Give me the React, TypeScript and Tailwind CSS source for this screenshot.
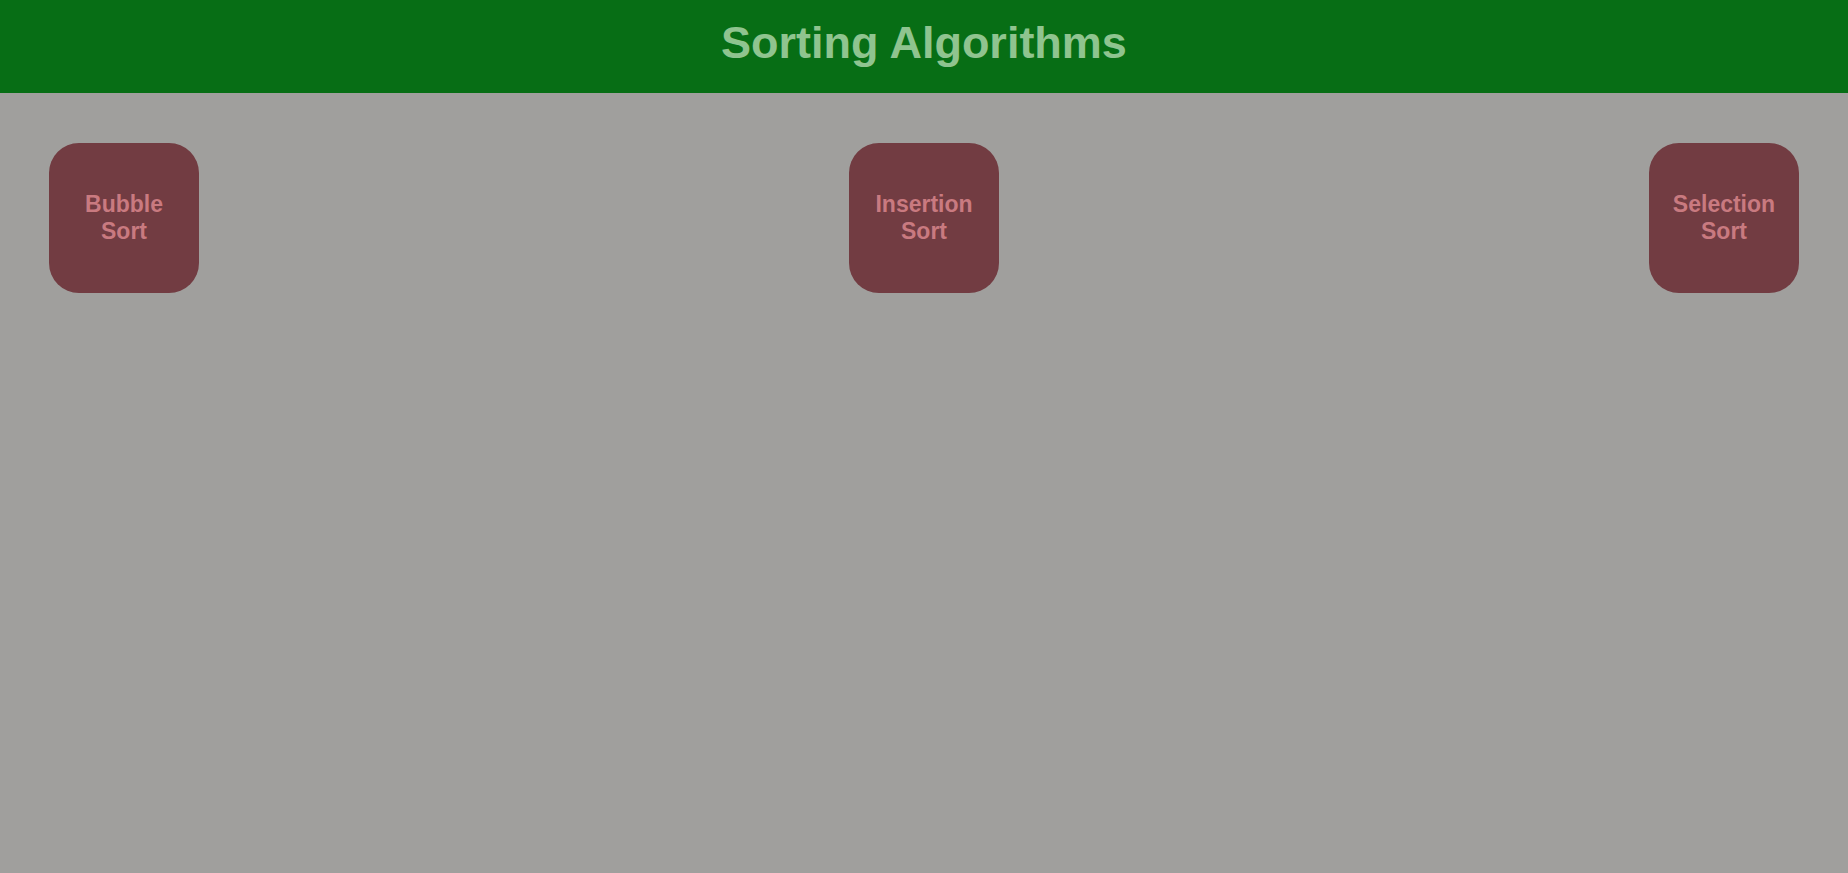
import React from "react";

const algos = [
  ["Bubble", "Sort"],
  ["Insertion", "Sort"],
  ["Selection", "Sort"],
];

export default function App() {
  return (
    <div
      className="w-full min-h-[873px] bg-[#a09f9d]"
      style={{ fontFamily: '"Liberation Sans", Arial, sans-serif' }}
    >
      <header className="h-[93px] bg-[#076e15] flex justify-center pt-[18px]">
        <h1 className="text-[45px] font-bold text-[#8fc48f] leading-[50px]">
          Sorting Algorithms
        </h1>
      </header>
      <div className="flex justify-between px-[49px] pt-[50px]">
        {algos.map((a) => (
          <button
            key={a[0]}
            className="w-[150px] h-[150px] rounded-[30px] bg-[#723c42] text-[#c97a80] font-bold text-[23px] leading-[27px] flex flex-col items-center justify-center"
          >
            <span>{a[0]}</span>
            <span>{a[1]}</span>
          </button>
        ))}
      </div>
    </div>
  );
}
